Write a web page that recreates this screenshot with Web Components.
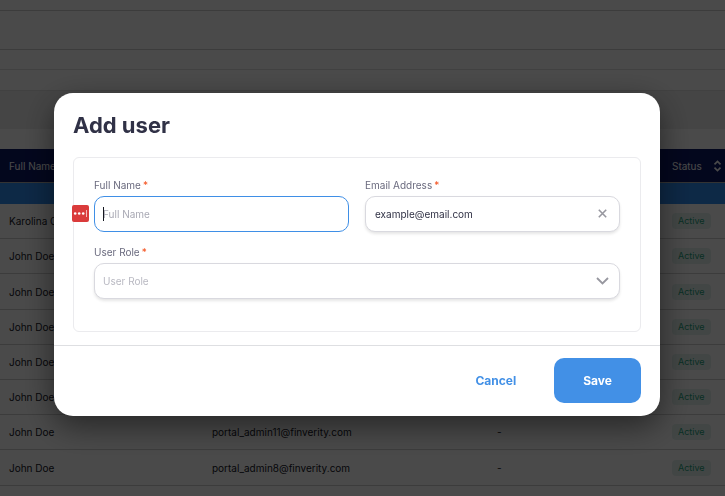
<!DOCTYPE html>
<html lang="en">
<head>
<meta charset="utf-8">
<meta name="viewport" content="width=device-width, initial-scale=1">
<title>Add user</title>
<style>
  html, body { margin: 0; height: 100%; }
  body {
    overflow: hidden;
    background: #fff;
    color: #14161f;
    font-family: Inter, "Liberation Sans", sans-serif;
    font-size: 10px;
  }
</style>
</head>
<body>
<users-page></users-page>
<modal-dialog heading="Add user">
  <form-panel>
    <text-field label="Full Name" placeholder="Full Name" active></text-field>
    <text-field label="Email Address" type="email" value="example@email.com" clearable></text-field>
    <select-field label="User Role" placeholder="User Role"></select-field>
  </form-panel>
  <action-button slot="actions" variant="text">Cancel</action-button>
  <action-button slot="actions">Save</action-button>
</modal-dialog>

<script>
const fieldStyles = `
  :host { display: block; min-width: 0; }
  label { display: block; font-size: 10px; line-height: 14px; margin-bottom: 4px; color: #6a6a7e; }
  label span { color: #f4511e; margin-left: 2px; }
  .box { position: relative; display: flex; }
  input, select {
    box-sizing: border-box;
    width: 100%;
    height: 36px;
    margin: 0;
    padding: 0 32px 0 9px;
    border: 1px solid #d9d9df;
    border-radius: 10px;
    background: #fff;
    box-shadow: 0 2px 3px rgba(0, 0, 0, .1);
    color: #2f3044;
    font: inherit;
    font-size: 10px;
    outline: none;
    appearance: none;
  }
  input::placeholder { color: #a9a9b4; opacity: 1; }
`;

class StatusBadge extends HTMLElement {
  constructor() {
    super();
    this.attachShadow({ mode: 'open' });
    this.shadowRoot.innerHTML = `<style>
      :host { display: inline-block; padding: 0 6px; border-radius: 4px; background: #e4f2ee; color: #26a17b; font-size: 9px; line-height: 16px; }
    </style><slot></slot>`;
  }
}

class UsersPage extends HTMLElement {
  constructor() {
    super();
    this.attachShadow({ mode: 'open' });
    this.users = [
      ['Karolina C', '', ''],
      ['John Doe', '', ''],
      ['John Doe', '', ''],
      ['John Doe', '', ''],
      ['John Doe', '', ''],
      ['John Doe', '', ''],
      ['John Doe', 'portal_admin11@finverity.com', '-'],
      ['John Doe', 'portal_admin8@finverity.com', '-'],
    ];
    const rows = this.users.map(([name, email, phone]) => `
      <tr><td>${name}</td><td>${email}</td><td>${phone}</td><td><status-badge>Active</status-badge></td></tr>`).join('');
    this.shadowRoot.innerHTML = `<style>
      :host { display: block; height: 100%; overflow: hidden; }
      .bar { box-sizing: border-box; border-bottom: 1px solid #d0d0d0; }
      .top { height: 11px; }
      .nav { height: 39px; }
      .crumbs { height: 20px; border-color: #e0e0e0; }
      .tabs { height: 21px; border-color: #e0e0e0; }
      .filters { height: 38px; background: #eee; }
      .gap { height: 20px; }
      table { width: 100%; table-layout: fixed; border-collapse: separate; border-spacing: 0; }
      .name { width: 28%; }
      .phone { width: 175px; }
      .status { width: 62px; }
      th, td { box-sizing: border-box; padding: 0 0 0 9px; text-align: left; font-weight: 400; white-space: nowrap; }
      th { height: 34px; background: #0c1866; color: #fff; border-bottom: 1px solid #b0b0b0; font-size: 10px; }
      td { height: 35px; border-bottom: 1px solid #d0d0d0; }
      tr:nth-child(5n + 3) td { height: 36px; }
      .selected td { height: 21px; background: #2f8cf0; border: 0; }
      .sort { display: flex; align-items: center; gap: 11px; }
    </style>
    <div class="bar top"></div>
    <div class="bar nav"></div>
    <div class="bar crumbs"></div>
    <div class="bar tabs"></div>
    <div class="filters"></div>
    <div class="gap"></div>
    <table>
      <colgroup><col class="name"><col><col class="phone"><col class="status"></colgroup>
      <thead>
        <tr><th>Full Name</th><th></th><th></th><th>
          <div class="sort">Status
            <svg width="9" height="12" viewBox="0 0 9 12" fill="none" stroke="#fff" stroke-width="1.6"><path d="M1.5 4.4 4.5 1.4l3 3M1.5 7.6l3 3 3-3"/></svg>
          </div>
        </th></tr>
        <tr class="selected"><td colspan="4"></td></tr>
      </thead>
      <tbody>${rows}</tbody>
    </table>`;
  }
}

class ModalDialog extends HTMLElement {
  constructor() {
    super();
    this.attachShadow({ mode: 'open' });
    this.shadowRoot.innerHTML = `<style>
      :host { position: fixed; inset: 0; box-sizing: border-box; padding: 93px 65px 0 54px; background: rgba(0, 0, 0, .71); }
      section { border-radius: 19px; background: #fff; box-shadow: 0 10px 32px rgba(0, 0, 0, .5); }
      h1 { margin: 0; padding: 18px 19px; color: #303146; font-size: 22px; line-height: 28px; font-weight: 700; }
      .content { padding: 0 19px 13px; }
      footer { display: flex; justify-content: flex-end; gap: 9px; padding: 12px 19px 13px; border-top: 1px solid #dedfe2; }
    </style>
    <section role="dialog" aria-modal="true" aria-labelledby="heading">
      <h1 id="heading">${this.getAttribute('heading') || ''}</h1>
      <div class="content"><slot></slot></div>
      <footer><slot name="actions"></slot></footer>
    </section>`;
  }
}

class FormPanel extends HTMLElement {
  constructor() {
    super();
    this.attachShadow({ mode: 'open' });
    this.shadowRoot.innerHTML = `<style>
      :host { display: grid; grid-template-columns: 1fr 1fr; gap: 13px 16px; padding: 20px 20px 32px; border: 1px solid #ebebee; border-radius: 6px; }
      ::slotted(select-field) { grid-column: 1 / -1; }
    </style><slot></slot>`;
  }
}

class TextField extends HTMLElement {
  constructor() {
    super();
    this.attachShadow({ mode: 'open' });
    const clear = `<button type="button" aria-label="Clear">
      <svg width="9" height="9" viewBox="0 0 9 9" stroke="#97979f" stroke-width="1.6"><path d="M.8.8l7.4 7.4M8.2.8.8 8.2"/></svg>
    </button>`;
    // password manager marker and text cursor of the field in use
    const active = `<svg class="manager" width="17" height="17" viewBox="0 0 17 17">
      <rect width="17" height="17" rx="2" fill="#da3b3b"/>
      <g fill="#fff"><circle cx="3.2" cy="8.5" r="1.3"/><circle cx="7.2" cy="8.5" r="1.3"/><circle cx="11.2" cy="8.5" r="1.3"/></g>
      <path d="M14.5 5v7" stroke="#f3b8b8" stroke-width="1"/>
    </svg><i class="cursor"></i>`;
    this.shadowRoot.innerHTML = `<style>${fieldStyles}
      :host([active]) input { border-color: #3f8fe6; box-shadow: none; padding-left: 8px; }
      button { position: absolute; right: 8px; top: 8px; display: grid; place-items: center; width: 19px; height: 19px; padding: 0; border: 0; background: none; }
      .manager { position: absolute; left: -22px; top: 9px; }
      .cursor { position: absolute; left: 9px; top: 11px; width: 1px; height: 14px; background: #14161f; }
    </style>
    <label for="field">${this.getAttribute('label')}<span>*</span></label>
    <div class="box">
      <input id="field" type="${this.getAttribute('type') || 'text'}" value="${this.getAttribute('value') || ''}" placeholder="${this.getAttribute('placeholder') || ''}" required>
      ${this.hasAttribute('clearable') ? clear : ''}
      ${this.hasAttribute('active') ? active : ''}
    </div>`;
    const button = this.shadowRoot.querySelector('button');
    if (button) button.addEventListener('click', () => this.shadowRoot.querySelector('input').value = '');
  }
}

class SelectField extends HTMLElement {
  constructor() {
    super();
    this.attachShadow({ mode: 'open' });
    this.shadowRoot.innerHTML = `<style>${fieldStyles}
      select { padding-left: 8px; color: #b9b9c2; }
      svg { position: absolute; right: 11px; top: 14px; pointer-events: none; }
    </style>
    <label for="field">${this.getAttribute('label')}<span>*</span></label>
    <div class="box">
      <select id="field" required><option value="">${this.getAttribute('placeholder')}</option></select>
      <svg width="13" height="8" viewBox="0 0 13 8" fill="none" stroke="#97979f" stroke-width="1.8"><path d="M1 1l5.5 5.5L12 1"/></svg>
    </div>`;
  }
}

class ActionButton extends HTMLElement {
  constructor() {
    super();
    this.attachShadow({ mode: 'open' });
    this.shadowRoot.innerHTML = `<style>
      :host { display: block; }
      button { height: 45px; padding: 0 29px; border: 0; border-radius: 10px; background: #4290e6; color: #fff; font: inherit; font-size: 12px; font-weight: 700; cursor: pointer; }
      :host([variant="text"]) button { background: none; color: #4290e6; }
    </style><button type="button"><slot></slot></button>`;
  }
}

window.customElements.define('status-badge', StatusBadge);
window.customElements.define('users-page', UsersPage);
window.customElements.define('action-button', ActionButton);
window.customElements.define('text-field', TextField);
window.customElements.define('select-field', SelectField);
window.customElements.define('form-panel', FormPanel);
window.customElements.define('modal-dialog', ModalDialog);
</script>
</body>
</html>
